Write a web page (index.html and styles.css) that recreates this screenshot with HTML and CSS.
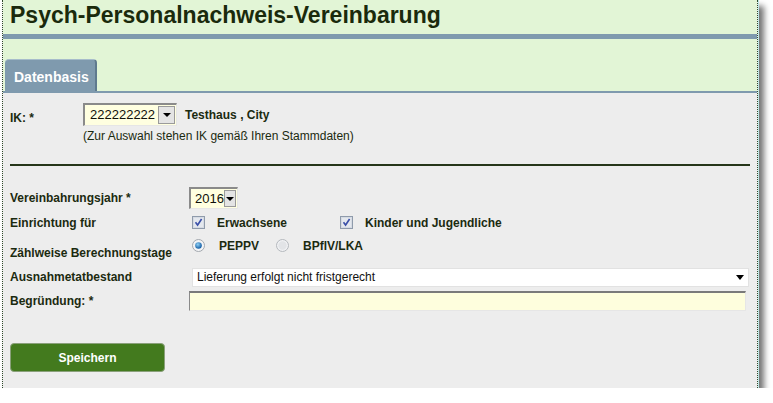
FILE: index.html
```html
<!DOCTYPE html>
<html lang="de">
<head>
<meta charset="utf-8">
<title>Psych-Personalnachweis-Vereinbarung</title>
<link rel="stylesheet" href="styles.css">
</head>
<body>
<div class="window">
  <div class="header">
    <h1 class="title">Psych-Personalnachweis-Vereinbarung</h1>
  </div>
  <div class="bar"></div>
  <div class="tabstrip">
    <div class="tab">Datenbasis</div>
  </div>
  <div class="tabline"></div>
  <div class="content">
    <div class="ik-row">
      <div class="ik-label">IK: *</div>
      <div class="ik-fields">
        <div class="ik-top">
          <div class="sel sel-ik">
            <span class="sel-value">222222222</span>
            <span class="sel-btn"><span class="tri"></span></span>
          </div>
          <span class="ik-name">Testhaus , City</span>
        </div>
        <div class="ik-hint">(Zur Auswahl stehen IK gemäß Ihren Stammdaten)</div>
      </div>
    </div>
    <div class="rule"></div>
    <div class="form">
      <div class="lbl row-year">Vereinbahrungsjahr *</div>
      <div class="ctl row-year">
        <div class="sel sel-year">
          <span class="sel-value">2016</span>
          <span class="sel-btn"><span class="tri"></span></span>
        </div>
      </div>

      <div class="lbl row-einr">Einrichtung für</div>
      <div class="ctl row-einr ctl-checks">
        <span class="opt opt-first">
          <svg class="cb" width="13" height="13" viewBox="0 0 13 13"><rect x="0.5" y="0.5" width="12" height="12" fill="#eef0f4" stroke="#8f9bab"/><rect x="1.5" y="1.5" width="10" height="10" fill="#e4e8ee" stroke="#d6dbe3"/><path d="M3.5 6.2 L5.6 9 L9.6 3" fill="none" stroke="#3a4fa8" stroke-width="1.6"/></svg>
          <span class="opt-text">Erwachsene</span>
        </span>
        <span class="opt">
          <svg class="cb" width="13" height="13" viewBox="0 0 13 13"><rect x="0.5" y="0.5" width="12" height="12" fill="#eef0f4" stroke="#8f9bab"/><rect x="1.5" y="1.5" width="10" height="10" fill="#e4e8ee" stroke="#d6dbe3"/><path d="M3.5 6.2 L5.6 9 L9.6 3" fill="none" stroke="#3a4fa8" stroke-width="1.6"/></svg>
          <span class="opt-text">Kinder und Jugendliche</span>
        </span>
      </div>

      <div class="lbl row-zw lbl-zw">Zählweise Berechnungstage</div>
      <div class="ctl row-zw ctl-radios">
        <span class="opt opt-r1">
          <svg class="rb" width="13" height="13" viewBox="0 0 13 13"><defs><radialGradient id="rg1" cx="0.4" cy="0.35" r="0.6"><stop offset="0" stop-color="#8fd0f5"/><stop offset="1" stop-color="#1a63a8"/></radialGradient></defs><circle cx="6.5" cy="6.5" r="6" fill="#f3f4f6" stroke="#a3a8ae"/><circle cx="6.5" cy="6.5" r="3.3" fill="url(#rg1)"/></svg>
          <span class="opt-text">PEPPV</span>
        </span>
        <span class="opt">
          <svg class="rb" width="13" height="13" viewBox="0 0 13 13"><circle cx="6.5" cy="6.5" r="6" fill="#f0f1f3" stroke="#b4b8bd"/><circle cx="6.5" cy="6.5" r="4.2" fill="#e2e4e7"/></svg>
          <span class="opt-text">BPflV/LKA</span>
        </span>
      </div>

      <div class="lbl row-std">Ausnahmetatbestand</div>
      <div class="ctl row-std">
        <div class="sel-wide">
          <span>Lieferung erfolgt nicht fristgerecht</span>
          <span class="tri tri-wide"></span>
        </div>
      </div>

      <div class="lbl row-std">Begründung: *</div>
      <div class="ctl row-std">
        <div class="text-input"></div>
      </div>
    </div>
    <div class="actions">
      <button class="btn" type="button">Speichern</button>
    </div>
  </div>
</div>
</body>
</html>
```

FILE: styles.css
```css
html, body {
  margin: 0;
  padding: 0;
  background: #ffffff;
}

body {
  font-family: "Liberation Sans", Arial, sans-serif;
  color: #1b2a10;
}

.window {
  margin-left: 2px;
  width: 754px;
  border-left: 1px dotted #2f4a2a;
  border-right: 1px dotted #2f4a2a;
  box-shadow: 1px 0 0 #bfe8e8, 6px 6px 6px rgba(0, 0, 0, 0.55);
  background: #ededed;
}

.header {
  background: #e2f5d6;
  height: 34px;
  padding-left: 7px;
}

.title {
  margin: 0;
  font-size: 23px;
  font-weight: bold;
  line-height: 31px;
  color: #1a2a0c;
}

.bar {
  height: 5px;
  background: #7f9aae;
}

.tabstrip {
  background: #e2f5d6;
  height: 52px;
  padding: 20px 0 0 2px;
  box-sizing: border-box;
  display: flex;
  align-items: flex-end;
}

.tab {
  height: 32px;
  width: 92px;
  box-sizing: border-box;
  background: #7f9aae;
  border-radius: 4px 4px 0 0;
  border-top: 1px solid #a7bccb;
  border-right: 2px solid #5f7a8e;
  color: #ffffff;
  font-size: 14px;
  font-weight: bold;
  padding: 9px 0 0 9px;
}

.tabline {
  height: 2px;
  background: #7f9aae;
}

.content {
  height: 295px;
  box-sizing: border-box;
  padding: 10px 7px 0 7px;
}

.ik-row {
  display: flex;
  font-size: 12px;
}

.ik-label {
  width: 73px;
  font-weight: bold;
  padding-top: 8px;
}

.ik-top {
  display: flex;
  align-items: center;
  gap: 8px;
}

.ik-name {
  font-weight: bold;
}

.ik-hint {
  margin-top: 3px;
}

.sel {
  display: flex;
  align-items: stretch;
  box-sizing: border-box;
  background: #ffffe0;
  border-top: 2px solid #8a8a8a;
  border-left: 2px solid #8a8a8a;
  border-right: 1px solid #e6e6e6;
  border-bottom: 1px solid #e6e6e6;
  color: #10100a;
}

.sel-ik {
  width: 94px;
  height: 23px;
  font-size: 13px;
}

.sel-ik .sel-value {
  flex: 1;
  padding: 2px 0 0 5px;
}

.sel-year {
  width: 49px;
  height: 22px;
  font-size: 13px;
}

.sel-year .sel-value {
  flex: 1;
  padding: 2px 0 0 4px;
}

.sel-btn {
  width: 17px;
  box-sizing: border-box;
  background: #e4e4e4;
  border: 1px solid #9a9a9a;
  margin: 1px 1px 1px 0;
  display: flex;
  align-items: center;
  justify-content: center;
}

.tri {
  width: 0;
  height: 0;
  border-left: 4px solid transparent;
  border-right: 4px solid transparent;
  border-top: 4px solid #000000;
}

.rule {
  height: 2px;
  background: #26361a;
  margin: 21px 0 0 0;
}

.form {
  display: grid;
  grid-template-columns: 179px 1fr;
  font-size: 12px;
  margin-top: 20px;
}

.lbl {
  font-weight: bold;
  display: flex;
  align-items: center;
}

.ctl {
  display: flex;
  align-items: center;
}

.row-year {
  height: 24px;
}

.row-einr {
  height: 25px;
}

.row-zw {
  height: 30px;
  align-items: flex-start;
}

.row-std {
  height: 24px;
}

.lbl-zw {
  padding-top: 11px;
  box-sizing: border-box;
}

.ctl-checks {
  padding-left: 3px;
}

.ctl-radios {
  padding-left: 3px;
  padding-top: 4px;
  box-sizing: border-box;
}

.opt {
  display: inline-flex;
  align-items: center;
  font-weight: bold;
}

.opt-first {
  width: 148px;
}

.opt-r1 {
  width: 84px;
}

.cb {
  margin-right: 12px;
}

.rb {
  margin-right: 14px;
  margin-top: -2px;
}

.sel-wide {
  width: 557px;
  height: 19px;
  box-sizing: border-box;
  background: #ffffff;
  border: 1px solid #e2e2e2;
  display: flex;
  align-items: center;
  justify-content: space-between;
  padding: 0 4px 0 4px;
  margin-left: 3px;
  color: #111111;
}

.tri-wide {
  border-top-width: 5px;
  border-left-width: 4px;
  border-right-width: 4px;
}

.text-input {
  width: 557px;
  height: 20px;
  box-sizing: border-box;
  background: #fefedd;
  border-top: 2px solid #7a7a7a;
  border-left: 1px solid #8a8a8a;
  border-right: 1px solid #e6e6e6;
  border-bottom: 1px solid #e6e6e6;
}

.actions {
  margin-top: 30px;
}

.btn {
  width: 155px;
  height: 29px;
  background: #437a1e;
  border: 1px solid #8aa07a;
  border-radius: 4px;
  color: #ffffff;
  font-family: "Liberation Sans", Arial, sans-serif;
  font-size: 12px;
  font-weight: bold;
  padding: 0;
}
```
